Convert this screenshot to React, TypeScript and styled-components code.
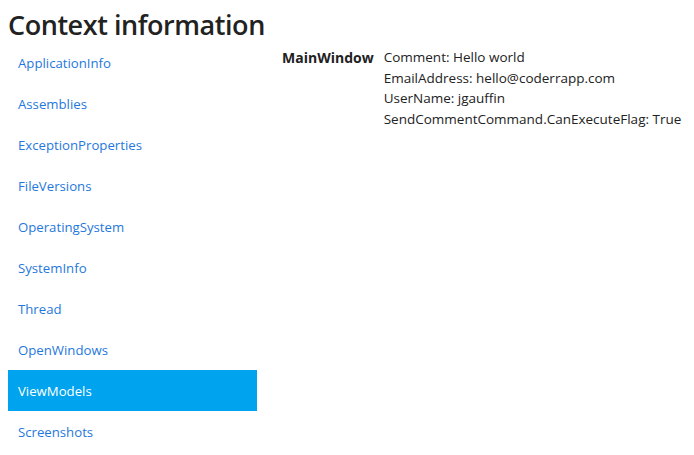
import React from "react";
import styled, { createGlobalStyle } from "styled-components";

const Global = createGlobalStyle`
  body {
    margin: 8px;
    font-family: "Open Sans", "Noto Sans", sans-serif;
    font-size: 14px;
    color: #222;
    background: #fff;
  }
`;

const Title = styled.h2`
  margin: 0;
  font-size: 27px;
  font-weight: 600;
  line-height: 34px;
  color: #222;
  letter-spacing: -0.45px;
`;

const Layout = styled.div`
  display: flex;
  align-items: flex-start;
`;

const Nav = styled.ul`
  list-style: none;
  margin: 0;
  padding: 0;
  width: 249px;
  flex: none;
`;

const NavItem = styled.li<{ $active?: boolean }>`
  height: 41px;
  display: flex;
  align-items: center;
  padding: 0 10px;
  font-size: 13.2px;
  color: ${(p) => (p.$active ? "#fff" : "#1f78dc")};
  background: ${(p) => (p.$active ? "#00a3ed" : "transparent")};
`;

const Content = styled.div`
  padding: 5px 0 0 25px;
  display: grid;
  grid-template-columns: auto auto;
  column-gap: 10px;
  align-items: start;
`;

const Key = styled.div`
  font-weight: 700;
  font-size: 14px;
  line-height: 21px;
  letter-spacing: 0;
`;

const Values = styled.div`
  display: flex;
  flex-direction: column;
  font-size: 13.5px;
  line-height: 20.7px;
`;

const items = [
  "ApplicationInfo",
  "Assemblies",
  "ExceptionProperties",
  "FileVersions",
  "OperatingSystem",
  "SystemInfo",
  "Thread",
  "OpenWindows",
  "ViewModels",
  "Screenshots",
];

export default function App() {
  return (
    <>
      <Global />
      <Title>Context information</Title>
      <Layout>
        <Nav>
          {items.map((i) => (
            <NavItem key={i} $active={i === "ViewModels"}>
              {i}
            </NavItem>
          ))}
        </Nav>
        <Content>
          <Key>MainWindow</Key>
          <Values>
            <span>Comment: Hello world</span>
            <span>EmailAddress: hello@coderrapp.com</span>
            <span>UserName: jgauffin</span>
            <span>SendCommentCommand.CanExecuteFlag: True</span>
          </Values>
        </Content>
      </Layout>
    </>
  );
}
